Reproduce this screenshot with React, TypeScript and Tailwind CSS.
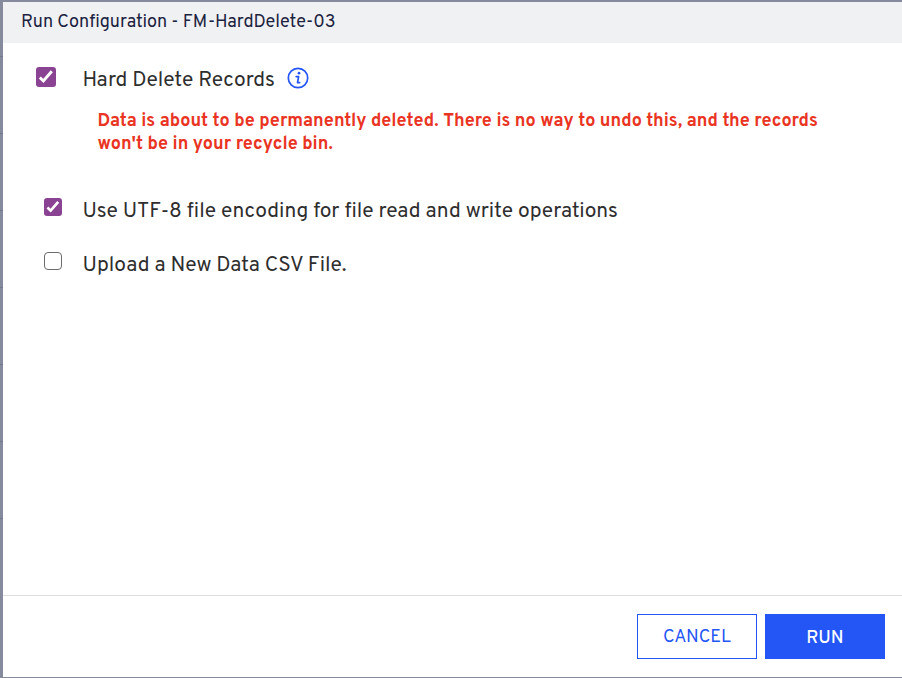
function Checkbox({ checked, large }: { checked: boolean; large?: boolean }) {
  const size = large ? 'h-5 w-5' : 'h-[18px] w-[18px]';
  return (
    <span
      role="checkbox"
      aria-checked={checked}
      className={`block shrink-0 ${size} ${checked ? 'rounded-[3px] bg-[#8a4293]' : 'rounded-[4px] border border-[#6c6c6c] bg-white'}`}
    >
      {checked && (
        <svg viewBox="0 0 20 20" className="block h-full w-full" fill="none" stroke="#fff" strokeWidth="2.9">
          <path d="M3.8 10.5 7.4 14 15.8 4.2" />
        </svg>
      )}
    </span>
  );
}

function InfoIcon() {
  return (
    <svg viewBox="0 0 22 22" className="block h-[22px] w-[22px]" fill="none" stroke="#2456f6">
      <circle cx="11" cy="11" r="9.7" strokeWidth="1.7" />
      <circle cx="12" cy="6.2" r="1.35" fill="#2456f6" stroke="none" />
      <path d="M9.2 9.6h2.4l-1.1 6h2.2" strokeWidth="1.7" strokeLinejoin="round" strokeLinecap="round" />
    </svg>
  );
}

export default function App() {
  return (
    <div className="flex h-[678px] w-[902px] flex-col overflow-hidden bg-[#868a9d] pt-[2px] pb-px font-['Overpass','Roboto',sans-serif]">
      <div className="flex min-h-0 flex-1">
        <div className="flex w-[3px] shrink-0 flex-col pt-[54px]">
          <div className="h-[77px] border-t border-[#74788e]" />
          <div className="h-[77px] border-t border-[#74788e]" />
          <div className="h-[77px] border-t border-[#74788e]" />
          <div className="h-[77px] border-t border-[#74788e]" />
          <div className="h-[77px] border-t border-[#74788e]" />
          <div className="h-[77px] border-t border-[#74788e]" />
          <div className="h-[77px] border-t border-[#74788e]" />
        </div>
        <div className="flex flex-1 flex-col bg-white">
          <header className="flex h-[41px] shrink-0 items-start bg-[#f0f1f3] pt-[9px] pl-[18px]">
            <h1 className="whitespace-nowrap text-[18px] leading-6 text-[#1b2340]">Run Configuration - FM-HardDelete-03</h1>
          </header>
          <main className="flex-1 text-[21px] leading-[28px] whitespace-nowrap text-[#2e2e2e]">
            <div className="flex h-6 pl-[33px] mt-6">
              <Checkbox checked large />
              <span className="ml-[26.5px] w-[204.5px]">Hard Delete Records</span>
              <InfoIcon />
            </div>
            <p className="mt-[19px] pl-[94.5px] text-[18px] font-bold leading-[23px] text-[#ea3423]">
              <span className="block">Data is about to be permanently deleted. There is no way to undo this, and the records</span>
              <span className="block">won't be in your recycle bin.</span>
            </p>
            <div className="mt-[42px] flex h-6 pl-[41px]">
              <Checkbox checked />
              <span className="ml-[20.5px]">Use UTF-8 file encoding for file read and write operations</span>
            </div>
            <div className="mt-[30px] flex h-6 pl-[41px]">
              <Checkbox checked={false} />
              <span className="ml-[20.5px]">Upload a New Data CSV File.</span>
            </div>
          </main>
          <footer className="flex h-[82px] shrink-0 justify-end gap-2 border-t border-[#dcdde0] pt-[18px] pr-[17px] text-[18px]">
            <button className="h-[45px] w-[120px] border border-[#2456f6] bg-white pt-[2px] text-[#2456f6]">CANCEL</button>
            <button className="h-[45px] w-[120px] bg-[#2456f6] pt-1 font-medium text-white">RUN</button>
          </footer>
        </div>
      </div>
    </div>
  );
}
